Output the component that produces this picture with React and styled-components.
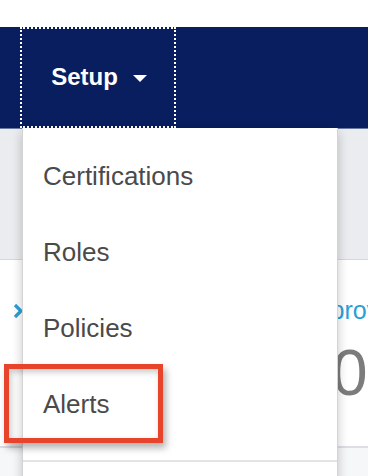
import React from "react";
import styled, { createGlobalStyle } from "styled-components";

const navy = "#081e5e";
const linkBlue = "#2a9fd6";

const GlobalStyle = createGlobalStyle`
  html, body {
    margin: 0;
    padding: 0;
    background: #ffffff;
    overflow: hidden;
  }
  body {
    font-family: "Liberation Sans", Arial, sans-serif;
  }
`;

const Screen = styled.div`
  position: relative;
  width: 368px;
  height: 476px;
  overflow: hidden;
  padding-top: 27px;
  box-sizing: border-box;
`;

const NavBar = styled.nav`
  height: 101px;
  background: ${navy};
  display: flex;
  align-items: stretch;
  padding-left: 20px;
  border-bottom: 1px solid #6b7aa0;
`;

const NavToggle = styled.button`
  width: 156px;
  background: transparent;
  border: 2px dotted #ffffff;
  color: #ffffff;
  font-family: "Liberation Sans", Arial, sans-serif;
  font-weight: bold;
  font-size: 24px;
  display: flex;
  align-items: center;
  justify-content: center;
  gap: 15px;
  padding: 0 0 2px 2px;
`;

const Caret = styled.span`
  width: 0;
  height: 0;
  border-left: 7px solid transparent;
  border-right: 7px solid transparent;
  border-top: 7px solid #ffffff;
  margin-top: 3px;
`;

const SubHeader = styled.div`
  height: 130px;
  background: #ebecef;
  border-bottom: 1px solid #d6d8dd;
`;

const Card = styled.section`
  height: 188px;
  display: flex;
  justify-content: space-between;
  padding: 36px 0 0 13px;
  box-sizing: border-box;
  border-bottom: 2px solid #dcdee3;
`;

const Chevron = styled.svg`
  width: 10px;
  height: 16px;
  margin-top: 7px;
`;

const Stats = styled.div`
  display: flex;
  flex-direction: column;
  align-items: flex-start;
  width: 50px;
  margin-right: -18px;
`;

const StatLink = styled.span`
  color: ${linkBlue};
  font-size: 25px;
  line-height: 28px;
  margin-left: -36px;
  white-space: nowrap;
`;

const StatValue = styled.span`
  color: #7c7c7c;
  font-size: 64px;
  line-height: 70px;
  margin-top: 14px;
  margin-left: -4px;
`;

const Footer = styled.div`
  height: 40px;
  background: #f6f7f9;
`;

const Dropdown = styled.ul`
  position: absolute;
  top: 128px;
  left: 22px;
  width: 316px;
  height: 400px;
  margin: 0;
  padding: 10px 0 0 0;
  list-style: none;
  background: #ffffff;
  border: 1px solid #d4d4d4;
  border-top: none;
  box-sizing: border-box;
  box-shadow: 0 4px 10px rgba(0, 0, 0, 0.22);
`;

const MenuItem = styled.li`
  height: 76px;
  padding-left: 20px;
  display: flex;
  align-items: center;
  color: #4a4a4a;
  font-size: 26px;
  font-family: "Liberation Sans", Arial, sans-serif;
`;

const Divider = styled.li`
  height: 2px;
  background: #e4e4e4;
  margin-top: 18px;
`;

const Highlight = styled.div`
  position: absolute;
  left: 4px;
  top: 364px;
  width: 159px;
  height: 79px;
  border: 5px solid #e8432b;
  box-sizing: border-box;
  box-shadow: 3px 5px 7px rgba(0, 0, 0, 0.3),
    inset 2px 3px 6px rgba(0, 0, 0, 0.22);
`;

const items = ["Certifications", "Roles", "Policies", "Alerts"];

export default function App() {
  return (
    <>
      <GlobalStyle />
      <Screen>
        <NavBar>
          <NavToggle>
            Setup <Caret />
          </NavToggle>
        </NavBar>
        <SubHeader />
        <Card>
          <Chevron viewBox="0 0 10 16">
            <path
              d="M2 2 L8 8 L2 14"
              fill="none"
              stroke={linkBlue}
              strokeWidth="3.2"
            />
          </Chevron>
          <Stats>
            <StatLink>Approvals</StatLink>
            <StatValue>0</StatValue>
          </Stats>
        </Card>
        <Footer />
        <Dropdown>
          {items.map((item) => (
            <MenuItem key={item}>{item}</MenuItem>
          ))}
          <Divider />
        </Dropdown>
        <Highlight />
      </Screen>
    </>
  );
}
